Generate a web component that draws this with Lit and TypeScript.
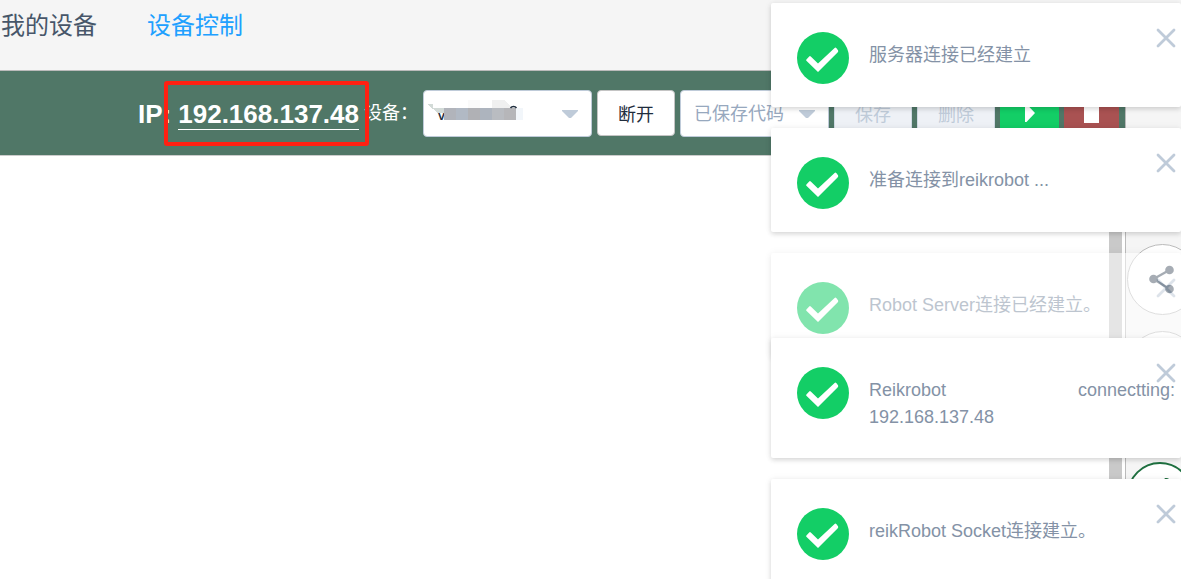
import { LitElement, html, css } from "lit";
import { customElement, property } from "lit/decorators.js";
import { classMap } from "lit/directives/class-map.js";

interface Notice {
  text: string;
  leaving?: boolean;
}

const NOTICES: Notice[] = [
  { text: "服务器连接已经建立" },
  { text: "准备连接到reikrobot ..." },
  { text: "Robot Server连接已经建立。", leaving: true },
  { text: "Reikrobot connectting: 192.168.137.48" },
  { text: "reikRobot Socket连接建立。" },
];

@customElement("notice-card")
class NoticeCard extends LitElement {
  @property() text = "";

  static styles = css`
    :host {
      display: block;
    }
    .card {
      position: relative;
      display: flex;
      align-items: flex-start;
      gap: 20px;
      box-sizing: border-box;
      padding: 29px 6px 23px 26px;
      background: #fff;
      border-radius: 2px;
      box-shadow: 0 2px 5px rgba(0, 0, 0, 0.14), 0 0 8px rgba(0, 0, 0, 0.05);
    }
    .status {
      flex: none;
      width: 52px;
      height: 52px;
      display: block;
    }
    .message {
      flex: 1;
      margin: 0;
      padding: 10px 0 4px;
      font-size: 18px;
      line-height: 27px;
      color: #8492a6;
      text-align: justify;
    }
    .close {
      position: absolute;
      top: 25px;
      right: 5px;
      padding: 0;
      border: 0;
      background: none;
      cursor: pointer;
    }
    .close svg {
      display: block;
      width: 20px;
      height: 20px;
    }
  `;

  render() {
    return html`
      <div class="card" role="status">
        <svg class="status" viewBox="0 0 52 52" aria-hidden="true">
          <circle cx="26" cy="26" r="26" fill="#13ce66" />
          <path
            d="M9.4 27.4 12.2 24.4Q13 23.7 13.8 24.5L21 31.6 37.6 15.9Q38.5 15.1 39.3 16L41 18.3Q41.6 19.3 40.8 20.2L21 40 9.4 28.8Q8.8 28.1 9.4 27.4Z"
            fill="#fff"
          />
        </svg>
        <p class="message">${this.text}</p>
        <button class="close" type="button" aria-label="关闭">
          <svg viewBox="0 0 20 20" aria-hidden="true">
            <path d="M2 2 18 18M18 2 2 18" stroke="#bfcbd9" stroke-width="2.8" stroke-linecap="round" />
          </svg>
        </button>
      </div>
    `;
  }
}

@customElement("app-root")
class AppRoot extends LitElement {
  static styles = css`
    :host {
      position: relative;
      display: flex;
      flex-direction: column;
      height: 100vh;
      overflow: hidden;
      background: #fff;
      font-family: "Liberation Sans", "Noto Sans CJK SC", sans-serif;
      font-size: 18px;
      color: #1f2d3d;
    }
    .nav {
      display: flex;
      gap: 50px;
      padding: 9px 1px 27px;
      background: #f5f5f5;
      border-bottom: 1px solid #bbb;
      font-size: 24px;
      line-height: 34px;
    }
    .nav a {
      color: #475669;
      text-decoration: none;
    }
    .nav a.current {
      color: #20a0ff;
    }
    .body {
      flex: 1;
      display: flex;
      min-height: 0;
    }
    .main {
      flex: 1;
      display: flex;
      flex-direction: column;
      min-width: 0;
    }
    .toolbar {
      display: flex;
      justify-content: flex-end;
      align-items: flex-start;
      gap: 5px;
      padding: 19px 6px 18px 0;
      background: #507767;
      border-bottom: 1px solid #ccc;
    }
    .ip {
      display: flex;
      gap: 7px;
      color: #fff;
      font-size: 26px;
      font-weight: bold;
      line-height: 30px;
      padding-top: 9px;
    }
    .address {
      position: relative;
      border-bottom: 1px solid #fff;
    }
    .marker {
      position: absolute;
      inset: -18px -10px -17px -14px;
      border: 4px solid #ff2012;
      border-radius: 3px;
    }
    .label {
      color: #fff;
      line-height: 26px;
      padding-top: 10px;
      white-space: nowrap;
    }
    .picker {
      position: relative;
      display: flex;
    }
    .picker select {
      appearance: none;
      box-sizing: border-box;
      width: 100%;
      height: 47px;
      padding: 0 38px 0 13px;
      border: 1px solid #bfcbd9;
      border-radius: 4px;
      background: #fff;
      color: #1f2d3d;
      font: inherit;
    }
    .picker.device {
      width: 169px;
    }
    .picker.code {
      width: 149px;
    }
    .picker.code select {
      color: #97a8be;
    }
    .arrow {
      position: absolute;
      top: 20px;
      right: 14px;
      width: 16px;
      height: 8px;
      pointer-events: none;
    }
    .mosaic {
      position: absolute;
      top: 10px;
      left: 4px;
      width: 96px;
      height: 22px;
      pointer-events: none;
    }
    .btn {
      box-sizing: border-box;
      height: 46px;
      padding: 0 20px;
      border: 1px solid #c4c4c4;
      border-radius: 4px;
      background: #fff;
      color: #1f2d3d;
      font: inherit;
      white-space: nowrap;
    }
    .btn:disabled {
      border-color: #d1dbe5;
      background: #eef1f6;
      color: #bfcbd9;
    }
    .btn.run,
    .btn.stop {
      display: flex;
      align-items: center;
      justify-content: center;
      padding: 0;
      border: 0;
    }
    .btn.run {
      width: 59px;
      background: #13ce66;
    }
    .btn.stop {
      width: 55px;
      background: #a95252;
    }
    .canvas {
      flex: 1;
      display: flex;
      justify-content: flex-end;
      padding-right: 3px;
    }
    .scroll {
      width: 13px;
      background: #c9c9c9;
    }
    .side {
      flex: none;
      box-sizing: border-box;
      width: 56px;
      padding: 173px 0 0 1px;
      border-left: 1px solid #bbb;
      background: #f5f5f5;
      display: flex;
      flex-direction: column;
      gap: 16px;
      overflow: hidden;
    }
    .round {
      flex: none;
      box-sizing: border-box;
      display: flex;
      align-items: center;
      justify-content: center;
      width: 71px;
      height: 71px;
      padding: 0;
      border: 1px solid #bbb;
      border-radius: 50%;
      background: #fff;
    }
    .round.ready {
      width: 66px;
      height: 66px;
      margin-top: 44px;
      border: 2px solid #1f7040;
    }
    .notices {
      position: absolute;
      top: 3px;
      right: 0;
      width: 410px;
      display: flex;
      flex-direction: column;
      gap: 21px;
    }
    .leaving {
      opacity: 0.53;
      margin-bottom: -40px;
    }
  `;

  private arrow() {
    return html`<svg class="arrow" viewBox="0 0 16 8" aria-hidden="true">
      <path d="M0 0H16V1L9 8H7L0 1Z" fill="#bfcbd9" />
    </svg>`;
  }

  render() {
    return html`
      <nav class="nav">
        <a href="#devices">我的设备</a>
        <a class="current" href="#control" aria-current="page">设备控制</a>
      </nav>
      <div class="body">
        <main class="main">
          <div class="toolbar">
            <div class="ip">
              <span>IP:</span>
              <span class="address">192.168.137.48<span class="marker"></span></span>
            </div>
            <label class="label" for="device">设备：</label>
            <div class="picker device">
              <select id="device">
                <option>v</option>
              </select>
              <svg class="mosaic" viewBox="0 0 96 22" shape-rendering="crispEdges" aria-hidden="true">
                <path d="M0 4H6V8L10 8H17V13H11Z" fill="#d2dad7" />
                <path d="M41 0H53V8H41Z" fill="#fafafa" />
                <path d="M65 0H77L85 8H65Z" fill="#f0f0f0" />
                <path d="M17 8H29V20H17Z" fill="#b1b4bb" />
                <path d="M29 8H41V20H29Z" fill="#b1b9c4" />
                <path d="M41 8H53V20H41Z" fill="#b0b1b5" />
                <path d="M53 8H65V20H53Z" fill="#adb4be" />
                <path d="M65 8H77V20H65Z" fill="#b9bcc1" />
                <path d="M77 8H89V20H77Z" fill="#b6b6b9" />
                <path d="M89 8H96V20H89Z" fill="#f2f6fa" />
                <path
                  d="M83.500 8Q84.500 6.500 86.500 6.500T89.500 8"
                  fill="none"
                  stroke="#1f2d3d"
                  stroke-width="1.4"
                  shape-rendering="auto"
                />
              </svg>
              ${this.arrow()}
            </div>
            <button class="btn" type="button">断开</button>
            <div class="picker code">
              <select aria-label="已保存代码">
                <option>已保存代码</option>
              </select>
              ${this.arrow()}
            </div>
            <button class="btn" type="button" disabled>保存</button>
            <button class="btn" type="button" disabled>删除</button>
            <button class="btn run" type="button" aria-label="运行">
              <svg width="10" height="18" viewBox="0 0 10 18" aria-hidden="true">
                <path d="M0 0H1.5L10 9 1.5 18H0Z" fill="#fff" />
              </svg>
            </button>
            <button class="btn stop" type="button" aria-label="停止">
              <svg width="15" height="20" viewBox="0 0 15 20" aria-hidden="true">
                <path d="M0 0H15V20H0Z" fill="#fff" />
              </svg>
            </button>
          </div>
          <div class="canvas"><div class="scroll"></div></div>
        </main>
        <aside class="side">
          <button class="round" type="button" aria-label="分享">
            <svg width="28" height="30" viewBox="0 0 28 30" aria-hidden="true">
              <path d="M20.5 5 4.500 14 20.500 24" fill="none" stroke="#42505f" stroke-width="2.4" />
              <circle cx="20.500" cy="5" r="4.300" fill="#42505f" />
              <circle cx="4.500" cy="14" r="4.300" fill="#42505f" />
              <circle cx="20.500" cy="24" r="4.300" fill="#42505f" />
            </svg>
          </button>
          <button class="round" type="button" aria-label="更多"></button>
          <button class="round ready" type="button" aria-label="就绪">
            <svg width="34" height="34" viewBox="0 0 34 34" aria-hidden="true">
              <path d="M3 19 13 29 24 0" fill="none" stroke="#1f7040" stroke-width="4" />
            </svg>
          </button>
        </aside>
      </div>
      <section class="notices" aria-label="通知">
        ${NOTICES.map(
          (n) => html`<notice-card class=${classMap({ leaving: !!n.leaving })} .text=${n.text}></notice-card>`
        )}
      </section>
    `;
  }
}
